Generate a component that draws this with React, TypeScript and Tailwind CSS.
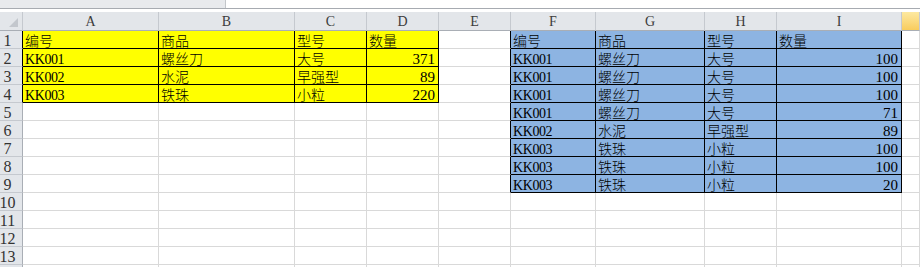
import React from "react";

const COL_LETTERS = ["A", "B", "C", "D", "E", "F", "G", "H", "I", "J"];
const ROW_COUNT = 14;

const yellowRows = [
  ["编号", "商品", "型号", "数量"],
  ["KK001", "螺丝刀", "大号", "371"],
  ["KK002", "水泥", "早强型", "89"],
  ["KK003", "铁珠", "小粒", "220"],
];

const blueRows = [
  ["编号", "商品", "型号", "数量"],
  ["KK001", "螺丝刀", "大号", "100"],
  ["KK001", "螺丝刀", "大号", "100"],
  ["KK001", "螺丝刀", "大号", "100"],
  ["KK001", "螺丝刀", "大号", "71"],
  ["KK002", "水泥", "早强型", "89"],
  ["KK003", "铁珠", "小粒", "100"],
  ["KK003", "铁珠", "小粒", "100"],
  ["KK003", "铁珠", "小粒", "20"],
];

// r: 1-based sheet row, c: 1-based column (A = 1)
function tableAt(r: number, c: number): "yellow" | "blue" | null {
  if (r >= 1 && r <= 4 && c >= 1 && c <= 4) return "yellow";
  if (r >= 1 && r <= 9 && c >= 6 && c <= 9) return "blue";
  return null;
}

function valueAt(r: number, c: number): string {
  const t = tableAt(r, c);
  if (t === "yellow") return yellowRows[r - 1][c - 1];
  if (t === "blue") return blueRows[r - 1][c - 6];
  return "";
}

const cjk = /[\u4e00-\u9fff]/;

function CellText({ value }: { value: string }) {
  if (!value) return null;
  if (cjk.test(value)) {
    return (
      <span className="pl-[2px] [font-family:'Noto_Sans_CJK_SC',sans-serif] font-light text-[14px] leading-[16px] text-black">
        {value}
      </span>
    );
  }
  const numeric = /^\d+$/.test(value);
  return (
    <span
      className={
        numeric
          ? "ml-auto pr-[3px] [font-family:'Liberation_Serif',serif] text-[15px] leading-[13px] text-black"
          : "pl-[2px] [font-family:'Liberation_Serif',serif] text-[14px] leading-[13px] tracking-[-0.4px] text-black"
      }
    >
      {value}
    </span>
  );
}

function DataCell({ r, c }: { r: number; c: number }) {
  const t = tableAt(r, c);
  const rightDark = t !== null || tableAt(r, c + 1) !== null;
  const bottomDark = t !== null;
  const bg = t === "yellow" ? "bg-[#ffff00]" : t === "blue" ? "bg-[#8db4e2]" : "bg-white";
  return (
    <div
      className={[
        "flex h-[18px] items-end overflow-hidden whitespace-nowrap border-r border-b",
        bg,
        rightDark ? "border-r-black" : "border-r-[#d9d9d9]",
        bottomDark ? "border-b-black" : "border-b-[#d9d9d9]",
      ].join(" ")}
    >
      <CellText value={valueAt(r, c)} />
    </div>
  );
}

function RowHeader({ r }: { r: number }) {
  const rightDark = tableAt(r, 1) !== null;
  return (
    <div
      className={[
        "flex h-[18px] items-end overflow-hidden border-r border-b border-b-[#c5c9cf] bg-[#e3e6ea]",
        rightDark ? "border-r-black" : "border-r-[#a9aeb5]",
      ].join(" ")}
    >
      <div className="-ml-[9px] w-[33px] shrink-0 text-center [font-family:'Liberation_Serif',serif] text-[16px] leading-[14px] text-[#333]">
        {r}
      </div>
    </div>
  );
}

function CornerCell() {
  return (
    <div className="h-[19px] border-r border-b border-r-[#c5c9cf] border-b-[#a9aeb5] bg-[#e3e6ea]">
      <svg width="22" height="18" viewBox="0 0 22 18" className="block">
        <polygon points="18,6 18,15 9,15" fill="#c3c7cd" />
      </svg>
    </div>
  );
}

function ColHeader({ letter, active }: { letter: string; active?: boolean }) {
  return (
    <div
      className={[
        "flex h-[19px] items-center justify-center overflow-hidden border-r border-b border-r-[#c5c9cf] border-b-[#a9aeb5] [font-family:'Liberation_Serif',serif] text-[14px] leading-[17px] text-[#3c3c3c]",
        active ? "bg-gradient-to-b from-[#fde9a0] to-[#f8cc5c]" : "bg-[#e3e6ea]",
      ].join(" ")}
    >
      {active ? "" : letter}
    </div>
  );
}

export default function App() {
  const rows = Array.from({ length: ROW_COUNT }, (_, i) => i + 1);
  return (
    <div className="h-[267px] w-[920px] overflow-hidden bg-white">
      {/* name box / formula bar strip */}
      <div className="flex h-[9px] border-b border-b-[#a7abb1]">
        <div className="w-[226px] border-r border-r-[#c3c6ca] bg-[#e8eaed]" />
        <div className="flex-1 bg-white" />
      </div>
      <div className="h-[3px] bg-white" />

      {/* sheet grid */}
      <div className="grid grid-cols-[23px_136px_136px_72px_72px_72px_85px_109px_72px_125px_1fr]">
        <CornerCell />
        {COL_LETTERS.map((l, i) => (
          <ColHeader key={l} letter={l} active={i === COL_LETTERS.length - 1} />
        ))}
        {rows.map((r) => (
          <React.Fragment key={r}>
            <RowHeader r={r} />
            {COL_LETTERS.map((l, i) => (
              <DataCell key={l} r={r} c={i + 1} />
            ))}
          </React.Fragment>
        ))}
      </div>
    </div>
  );
}
